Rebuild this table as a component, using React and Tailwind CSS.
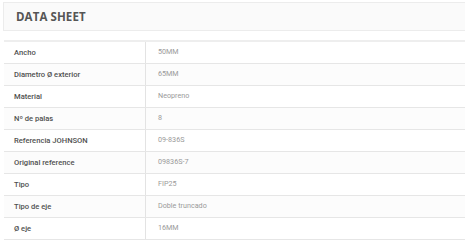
const rows = [
  ["Ancho", "50MM"],
  ["Diametro Ø exterior", "65MM"],
  ["Material", "Neopreno"],
  ["Nº de palas", "8"],
  ["Referencia JOHNSON", "09-836S"],
  ["Original reference", "09836S-7"],
  ["Tipo", "FIP25"],
  ["Tipo de eje", "Doble truncado"],
  ["Ø eje", "16MM"],
];

export default function App() {
  return (
    <div className="w-[465px] h-[243px] bg-white pt-[2px] pl-[3px] overflow-hidden">
      {/* header */}
      <div className="h-[29px] flex items-center pl-[12px] bg-[#fafafa] border border-r-0 border-[#ececec]">
        <span className="text-[11.5px] font-bold text-[#555] tracking-[0.1px]" style={{ fontFamily: '"Open Sans", sans-serif' }}>
          DATA SHEET
        </span>
      </div>

      {/* table */}
      <div className="mt-[9px] ml-[1px] border-t-2 border-[#eeeeee]" style={{ fontFamily: 'Roboto, "Liberation Sans", sans-serif' }}>
        {rows.map(([k, v], i) => (
          <div key={k} className={`flex h-[22px] border-b border-[#e6e6e6] ${i % 2 === 1 ? "bg-[#fcfcfc]" : "bg-white"}`}>
            <div className="w-[142px] shrink-0 flex items-center pl-[10px] border-r border-[#e3e3e3] text-[7.6px] font-medium text-[#505050]">
              {k}
            </div>
            <div className="flex items-center pl-[12px] text-[7.2px] text-[#9a9a9a]">
              {v}
            </div>
          </div>
        ))}
      </div>
    </div>
  );
}
